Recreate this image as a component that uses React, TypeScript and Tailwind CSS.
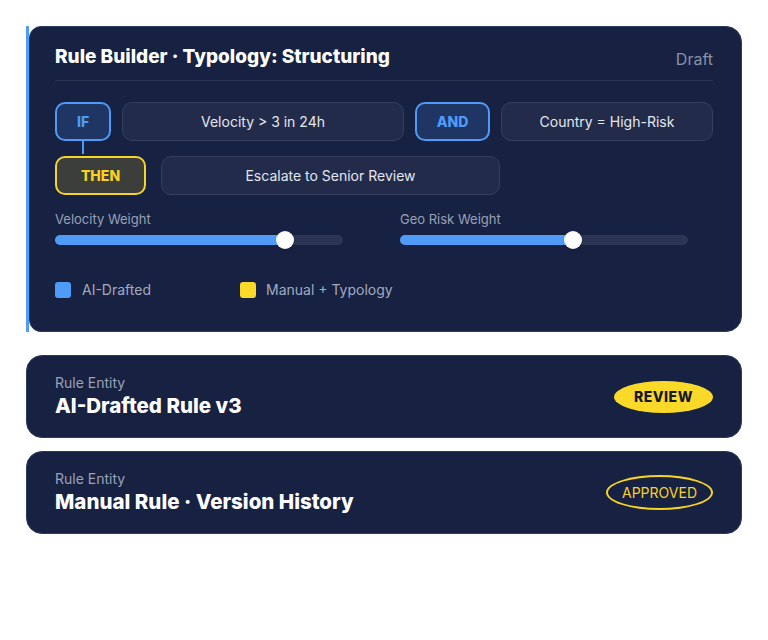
import React from "react";

const font = { fontFamily: "Inter, 'Noto Sans', sans-serif" };

type SliderProps = { label: string; value: number };

function WeightSlider({ label, value }: SliderProps) {
  return (
    <div className="flex flex-col">
      <span className="text-[13px] leading-[18px] text-[#98a1b8]">{label}</span>
      <div className="relative mt-[7px] h-[10px] w-[288px] rounded-full bg-[#2c3553]">
        <div className="h-full rounded-full bg-[#4e9cf8]" style={{ width: `${value}%` }} />
        <div
          className="absolute top-1/2 h-[18px] w-[18px] -translate-x-1/2 -translate-y-1/2 rounded-full bg-white shadow"
          style={{ left: `${value}%` }}
        />
      </div>
    </div>
  );
}

function Chip({ children, className = "" }: { children: React.ReactNode; className?: string }) {
  return (
    <div
      className={`flex h-[39px] shrink-0 items-center justify-center rounded-[10px] border border-[#353e5c] bg-[#222b49] text-[14px] text-[#e3e7f0] ${className}`}
    >
      {children}
    </div>
  );
}

function EntityCard({ title, badge }: { title: string; badge: React.ReactNode }) {
  return (
    <div className="flex h-[83px] items-center justify-between rounded-2xl border border-[#2d3a5f] bg-[#172142] pl-[28px] pr-[28px]">
      <div className="flex flex-col">
        <span className="text-[14px] leading-[18px] text-[#9aa3b9]">Rule Entity</span>
        <span className="mt-[1px] text-[20.5px] font-extrabold leading-[26px] text-white">{title}</span>
      </div>
      {badge}
    </div>
  );
}

export default function App() {
  return (
    <div className="min-h-[640px] w-[768px] bg-white px-[26px] pt-[26px]" style={font}>
      {/* Rule builder panel with accent bar */}
      <div className="flex">
        <div className="w-[3px] shrink-0 bg-[#4e9cf8]" />
        <div className="min-w-0 flex-1 rounded-2xl rounded-l-xl border border-[#2d3a5f] bg-[#172142] pb-[31px] pl-[25px] pr-[28px] pt-[16px]">
          <div className="flex items-center justify-between border-b border-[#2a3353] pb-[9px]">
            <h1 className="text-[19px] font-extrabold leading-[26px] text-white">
              Rule Builder · Typology: Structuring
            </h1>
            <span className="mt-[4px] text-[16px] text-[#8891a8]">Draft</span>
          </div>

          <div className="mt-[21px] flex flex-col gap-[15px]">
            <div className="flex gap-[11px]">
              <div className="relative flex h-[39px] w-[56px] shrink-0 items-center justify-center rounded-[10px] border-2 border-[#4e9cf8] bg-[#1f3564] text-[14px] font-extrabold text-[#4e9cf8]">
                IF
                <div className="absolute left-1/2 top-full h-[15px] w-[2px] -translate-x-1/2 bg-[#4e9cf8]" />
              </div>
              <Chip className="w-[282px]">Velocity &gt; 3 in 24h</Chip>
              <div className="flex h-[39px] w-[75px] shrink-0 items-center justify-center rounded-[10px] border-2 border-[#4e9cf8] bg-[#1f3564] text-[14px] font-extrabold text-[#4e9cf8]">
                AND
              </div>
              <Chip className="w-[212px]">Country = High-Risk</Chip>
            </div>
            <div className="flex gap-[15px]">
              <div className="flex h-[39px] w-[91px] items-center justify-center rounded-[10px] border-2 border-[#f7d325] bg-[#3b3e3b] text-[14px] font-extrabold text-[#f7d325]">
                THEN
              </div>
              <Chip className="w-[339px]">Escalate to Senior Review</Chip>
            </div>
          </div>

          <div className="mt-[15px] grid grid-cols-[345px_1fr]">
            <WeightSlider label="Velocity Weight" value={80} />
            <WeightSlider label="Geo Risk Weight" value={60} />
          </div>

          <div className="mt-[34px] flex text-[14px] text-[#a2aabe]">
            <div className="flex w-[185px] items-center gap-[11px]">
              <span className="h-[16px] w-[16px] rounded-[3px] bg-[#4e9cf8]" />
              AI-Drafted
            </div>
            <div className="flex items-center gap-[10px]">
              <span className="h-[16px] w-[16px] rounded-[3px] bg-[#fbd928]" />
              Manual + Typology
            </div>
          </div>
        </div>
      </div>

      <div className="mt-[23px] flex flex-col gap-[13px]">
        <EntityCard
          title="AI-Drafted Rule v3"
          badge={
            <span className="flex h-[32px] w-[99px] items-center justify-center rounded-[50%] bg-[#fbd928] text-[14px] font-extrabold tracking-[0.5px] text-[#141a2e]">
              REVIEW
            </span>
          }
        />
        <EntityCard
          title="Manual Rule · Version History"
          badge={
            <span className="flex h-[35px] w-[107px] items-center justify-center rounded-[50%] border-2 border-[#f7d325] text-[14px] text-[#f7d325]">
              APPROVED
            </span>
          }
        />
      </div>
    </div>
  );
}
